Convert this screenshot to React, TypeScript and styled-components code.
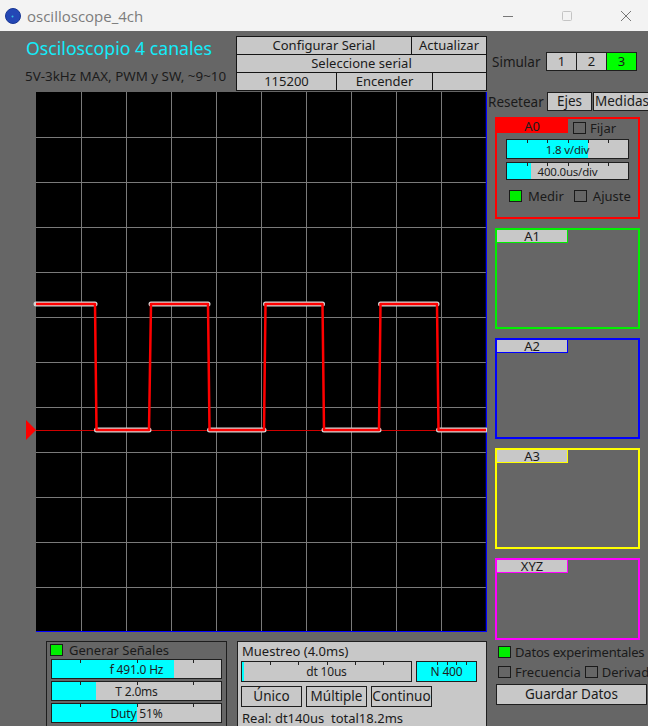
import React from "react";
import styled, { createGlobalStyle } from "styled-components";

const Global = createGlobalStyle`
  html, body { margin: 0; padding: 0; background: #666666; overflow: hidden; }
  * { box-sizing: border-box; }
`;

const FONT = `"Noto Sans", "Open Sans", sans-serif`;

const Window = styled.div`
  width: 648px;
  height: 726px;
  display: flex;
  flex-direction: column;
  overflow: hidden;
  font-family: ${FONT};
  color: #1a1a1a;
  background: #666666;
`;

/* ---------- title bar ---------- */
const TitleBar = styled.div`
  flex: none;
  height: 31px;
  background: #f3f3f3;
  display: flex;
  align-items: center;
  padding-left: 5px;
`;
const AppName = styled.span`
  margin-left: 6px;
  font-family: "Open Sans", "Noto Sans", sans-serif;
  font-size: 15px;
  color: #7c7c7c;
`;
const WinControls = styled.div`
  margin-left: auto;
  display: flex;
  gap: 15px;
  height: 100%;
`;
const WinBtn = styled.div`
  width: 44px;
  height: 100%;
  display: flex;
  align-items: center;
  justify-content: center;
`;

/* ---------- body ---------- */
const Body = styled.div`
  flex: 1;
  display: flex;
  min-height: 0;
`;
const LeftCol = styled.div`
  width: 487px;
  flex: none;
  display: flex;
  flex-direction: column;
`;
const Header = styled.div`
  height: 61px;
  display: flex;
`;
const TitleBlock = styled.div`
  width: 236px;
  padding: 7px 0 0 26px;
  display: flex;
  flex-direction: column;
`;
const MainTitle = styled.div`
  font-size: 17.7px;
  line-height: 20px;
  color: #12ecfa;
  white-space: nowrap;
`;
const SubTitle = styled.div`
  margin-top: 9px;
  margin-left: -1px;
  font-size: 13.4px;
  line-height: 18px;
  color: #1c1c1c;
  white-space: nowrap;
`;
const SerialGrid = styled.div`
  margin-top: 5px;
  width: 251px;
  height: 55px;
  display: grid;
  grid-template-columns: 100px 75px 21px 54px;
  grid-template-rows: 18px 18px 18px;
  border-top: 1px solid #151515;
  border-left: 1px solid #151515;
`;
const GridCell = styled.div<{ $span: string }>`
  grid-column: ${(p) => p.$span};
  background: #c8c8c8;
  border-right: 1px solid #151515;
  border-bottom: 1px solid #151515;
  font-size: 13px;
  line-height: 17px;
  text-align: center;
  white-space: nowrap;
  overflow: hidden;
`;

const PlotSvg = styled.svg`
  display: block;
  flex: none;
`;

const Bottom = styled.div`
  flex: 1;
  display: flex;
  padding-top: 9px;
  overflow: hidden;
`;
const GenPanel = styled.div`
  margin-left: 46px;
  width: 181px;
  height: 92px;
  border: 1px solid #1e1e1e;
  padding: 1px 0 0 3px;
  display: flex;
  flex-direction: column;
  gap: 2px;
`;
const GenHead = styled.div`
  display: flex;
  align-items: center;
  height: 14px;
  gap: 6px;
  font-size: 13px;
`;
const SliderStack = styled.div`
  display: flex;
  flex-direction: column;
  gap: 2px;
  padding-left: 1px;
`;
const MuestPanel = styled.div`
  margin-left: 10px;
  width: 250px;
  height: 92px;
  background: #c8c8c8;
  border: 1px solid #1e1e1e;
  padding: 0 0 0 3px;
  display: flex;
  flex-direction: column;
`;
const PanelText = styled.div<{ $mt?: number }>`
  font-size: 13px;
  line-height: 18px;
  white-space: nowrap;
  padding-left: 1px;
  margin-top: ${(p) => p.$mt ?? 0}px;
`;
const Row = styled.div<{ $gap: number; $mt: number }>`
  display: flex;
  gap: ${(p) => p.$gap}px;
  margin-top: ${(p) => p.$mt}px;
`;
const Btn = styled.div<{ $w: number; $h: number; $ml?: number }>`
  width: ${(p) => p.$w}px;
  height: ${(p) => p.$h}px;
  margin-left: ${(p) => p.$ml ?? 0}px;
  flex: none;
  background: #c8c8c8;
  border: 1px solid #1e1e1e;
  font-size: 13.5px;
  line-height: ${(p) => p.$h - 2}px;
  text-align: center;
  white-space: nowrap;
  overflow: hidden;
`;

/* ---------- slider ---------- */
const SliderBox = styled.div<{ $w: number; $h: number }>`
  position: relative;
  width: ${(p) => p.$w}px;
  height: ${(p) => p.$h}px;
  flex: none;
  background: #c8c8c8;
  border: 1px solid #1e1e1e;
  display: flex;
  align-items: center;
  justify-content: center;
  overflow: hidden;
`;
const SliderFill = styled.div`
  position: absolute;
  left: 0;
  top: 0;
  bottom: 0;
  background: #00ffff;
`;
const Tick = styled.div`
  position: absolute;
  top: 0;
  width: 1px;
  height: 3px;
  background: #222;
`;
const SliderText = styled.span<{ $size: number }>`
  position: relative;
  font-size: ${(p) => p.$size}px;
  color: #1e1e1e;
  white-space: nowrap;
  letter-spacing: -0.2px;
`;

function Slider({
  w,
  h,
  fill,
  text,
  size = 12,
  ticks = [1, 2, 3, 4, 5],
}: {
  w: number;
  h: number;
  fill: number;
  text: string;
  size?: number;
  ticks?: number[];
}) {
  return (
    <SliderBox $w={w} $h={h}>
      <SliderFill style={{ width: `${fill * 100}%` }} />
      {ticks.map((t) => (
        <Tick key={t} style={{ left: `${(t / 6) * 100}%` }} />
      ))}
      <SliderText $size={size}>{text}</SliderText>
    </SliderBox>
  );
}

/* ---------- check ---------- */
const CheckBox = styled.div<{ $on?: boolean }>`
  width: 13px;
  height: 12px;
  flex: none;
  border: 1px solid #1a1a1a;
  background: ${(p) => (p.$on ? "#00ee00" : "transparent")};
`;

/* ---------- side column ---------- */
const Side = styled.div`
  width: 161px;
  flex: none;
  display: flex;
  flex-direction: column;
  padding-top: 21px;
  overflow: hidden;
`;
const SideRow = styled.div<{ $mt: number; $pl: number }>`
  display: flex;
  align-items: center;
  height: 19px;
  margin-top: ${(p) => p.$mt}px;
  padding-left: ${(p) => p.$pl}px;
  white-space: nowrap;
`;
const SideLabel = styled.span<{ $w: number }>`
  width: ${(p) => p.$w}px;
  flex: none;
  font-size: 13.5px;
`;
const SegBtn = styled.div<{ $on?: boolean }>`
  width: 31px;
  height: 19px;
  border: 1px solid #1e1e1e;
  background: ${(p) => (p.$on ? "#00ff00" : "#c8c8c8")};
  font-size: 13px;
  line-height: 17px;
  text-align: center;
  & + & {
    margin-left: -1px;
  }
`;
const Channels = styled.div`
  margin: 6px 0 0 8px;
  display: flex;
  flex-direction: column;
  gap: 9px;
`;
const ChannelPanel = styled.div<{ $color: string; $h: number }>`
  width: 145px;
  height: ${(p) => p.$h}px;
  border: 2px solid ${(p) => p.$color};
  display: flex;
  flex-direction: column;
`;
const PanelHead = styled.div`
  display: flex;
  align-items: center;
  height: 18px;
`;
const ChanLabel = styled.div<{ $bg: string; $border: string; $mt: number }>`
  width: 72px;
  height: 14px;
  margin: ${(p) => p.$mt}px 0 0 -1px;
  align-self: flex-start;
  background: ${(p) => p.$bg};
  border: 1px solid ${(p) => p.$border};
  font-size: 13px;
  line-height: 12px;
  text-align: center;
`;
const InlineCheck = styled.div<{ $ml: number; $gap?: number }>`
  display: flex;
  align-items: center;
  gap: ${(p) => p.$gap ?? 4}px;
  margin-left: ${(p) => p.$ml}px;
  font-size: 13px;
  white-space: nowrap;
`;
const ChanBody = styled.div`
  display: flex;
  flex-direction: column;
  gap: 3px;
  padding: 2px 0 0 9px;
`;
const MeasureRow = styled.div`
  display: flex;
  align-items: center;
  margin: 10px 0 0 12px;
  height: 12px;
`;
const CheckLine = styled.div<{ $mt: number }>`
  display: flex;
  align-items: center;
  height: 14px;
  margin: ${(p) => p.$mt}px 0 0 11px;
  white-space: nowrap;
`;
const SaveBtn = styled.div`
  margin: 5px 0 0 9px;
  width: 151px;
  height: 21px;
  background: #c8c8c8;
  border: 1px solid #1e1e1e;
  font-size: 13.5px;
  line-height: 19px;
  text-align: center;
`;

/* ---------- plot ---------- */
const HIGH = 212;
const LOW = 338;
const tracePts: [number, number][] = [
  [36, HIGH], [95, HIGH], [96.5, LOW], [149, LOW], [151, HIGH], [208, HIGH],
  [209.5, LOW], [264, LOW], [265.5, HIGH], [322.5, HIGH], [324, LOW], [379, LOW],
  [380.5, HIGH], [437, HIGH], [438.5, LOW], [486, LOW],
];
const horizSegs: [number, number, number][] = [];
for (let i = 0; i < tracePts.length - 1; i++) {
  const [x1, y1] = tracePts[i];
  const [x2, y2] = tracePts[i + 1];
  if (y1 === y2) horizSegs.push([x1, x2, y1]);
}

function Plot() {
  const vx = [81, 126, 171, 216, 261, 306, 351, 396, 441];
  const hy = Array.from({ length: 11 }, (_, i) => 45 * (i + 1));
  return (
    <PlotSvg width={487} height={540} viewBox="0 0 487 540">
      <rect x={36} y={0} width={451} height={540} fill="#000" />
      {vx.map((x) => (
        <line key={"v" + x} x1={x + 0.5} y1={0} x2={x + 0.5} y2={540} stroke="#7a7a7a" strokeWidth={1} />
      ))}
      {hy.map((y) => (
        <line key={"h" + y} x1={36} y1={y + 0.5} x2={487} y2={y + 0.5} stroke="#7a7a7a" strokeWidth={1} />
      ))}
      <line x1={486.5} y1={0} x2={486.5} y2={540} stroke="#0000ff" strokeWidth={1.5} />
      <line x1={36} y1={539.5} x2={487} y2={539.5} stroke="#0000ff" strokeWidth={1} />
      <line x1={36} y1={LOW + 0.5} x2={486} y2={LOW + 0.5} stroke="#d00000" strokeWidth={1} />
      {horizSegs.map(([x1, x2, y], i) => (
        <line key={"s" + i} x1={x1} y1={y} x2={x2} y2={y} stroke="#d4d4d4" strokeWidth={5} strokeLinecap="round" />
      ))}
      <polyline
        points={tracePts.map((p) => p.join(",")).join(" ")}
        fill="none"
        stroke="#ff0000"
        strokeWidth={2.5}
        strokeLinejoin="round"
      />
      <polygon points={`26,${LOW - 10} 26,${LOW + 10} 36,${LOW}`} fill="#ff0000" />
    </PlotSvg>
  );
}

export default function App() {
  return (
    <Window>
      <Global />
      <TitleBar>
        <svg width="16" height="16" viewBox="0 0 16 16">
          <circle cx="8" cy="8" r="7.5" fill="#2447b5" stroke="#193794" strokeWidth="1" />
          <circle cx="7.5" cy="8.5" r="1" fill="#36c0e0" />
        </svg>
        <AppName>oscilloscope_4ch</AppName>
        <WinControls>
          <WinBtn>
            <svg width="12" height="12" viewBox="0 0 12 12">
              <line x1="1" y1="6.5" x2="11" y2="6.5" stroke="#777" strokeWidth="1" />
            </svg>
          </WinBtn>
          <WinBtn>
            <svg width="12" height="12" viewBox="0 0 12 12">
              <rect x="1.5" y="1.5" width="9" height="9" rx="1" fill="none" stroke="#c4c4c4" strokeWidth="1" />
            </svg>
          </WinBtn>
          <WinBtn>
            <svg width="12" height="12" viewBox="0 0 12 12">
              <path d="M1 1 L11 11 M11 1 L1 11" stroke="#777" strokeWidth="1" />
            </svg>
          </WinBtn>
        </WinControls>
      </TitleBar>
      <Body>
        <LeftCol>
          <Header>
            <TitleBlock>
              <MainTitle>Osciloscopio 4 canales</MainTitle>
              <SubTitle>5V-3kHz MAX, PWM y SW, ~9~10</SubTitle>
            </TitleBlock>
            <SerialGrid>
              <GridCell $span="1 / 3">Configurar Serial</GridCell>
              <GridCell $span="3 / 5">Actualizar</GridCell>
              <GridCell $span="1 / 5">Seleccione serial</GridCell>
              <GridCell $span="1 / 2">115200</GridCell>
              <GridCell $span="2 / 4">Encender</GridCell>
              <GridCell $span="4 / 5" />
            </SerialGrid>
          </Header>
          <Plot />
          <Bottom>
            <GenPanel>
              <GenHead>
                <CheckBox $on />
                <span>Generar Señales</span>
              </GenHead>
              <SliderStack>
                <Slider w={171} h={20} fill={0.72} text="f 491.0 Hz" ticks={[1, 3, 5]} />
                <Slider w={171} h={20} fill={0.26} text="T 2.0ms" ticks={[1, 3, 5]} />
                <Slider w={171} h={20} fill={0.5} text="Duty 51%" ticks={[1, 3, 5]} />
              </SliderStack>
            </GenPanel>
            <MuestPanel>
              <PanelText>Muestreo (4.0ms)</PanelText>
              <Row $gap={4} $mt={1}>
                <Slider w={171} h={21} fill={0.012} text="dt 10us" />
                <Slider w={61} h={21} fill={1} text="N 400" ticks={[2, 3, 4, 5]} />
              </Row>
              <Row $gap={4} $mt={4}>
                <Btn $w={61} $h={21}>Único</Btn>
                <Btn $w={61} $h={21}>Múltiple</Btn>
                <Btn $w={61} $h={21}>Continuo</Btn>
              </Row>
              <PanelText $mt={2}>Real: dt140us&nbsp; total18.2ms</PanelText>
            </MuestPanel>
          </Bottom>
        </LeftCol>
        <Side>
          <SideRow $mt={0} $pl={5}>
            <SideLabel $w={54}>Simular</SideLabel>
            <SegBtn>1</SegBtn>
            <SegBtn>2</SegBtn>
            <SegBtn $on>3</SegBtn>
          </SideRow>
          <SideRow $mt={21} $pl={1}>
            <SideLabel $w={59}>Resetear</SideLabel>
            <Btn $w={45} $h={19}>Ejes</Btn>
            <Btn $w={58} $h={19} $ml={1}>Medidas</Btn>
          </SideRow>
          <Channels>
            <ChannelPanel $color="#ff0000" $h={102}>
              <PanelHead>
                <ChanLabel $bg="#ff0000" $border="#ff0000" $mt={0}>A0</ChanLabel>
                <InlineCheck $ml={5}>
                  <CheckBox />
                  <span>Fijar</span>
                </InlineCheck>
              </PanelHead>
              <ChanBody>
                <Slider w={123} h={20} fill={0.67} text="1.8 v/div" size={11.5} />
                <Slider w={123} h={18} fill={0.2} text="400.0us/div" size={11.5} />
              </ChanBody>
              <MeasureRow>
                <InlineCheck $ml={0} $gap={6}>
                  <CheckBox $on />
                  <span>Medir</span>
                </InlineCheck>
                <InlineCheck $ml={10} $gap={6}>
                  <CheckBox />
                  <span>Ajuste</span>
                </InlineCheck>
              </MeasureRow>
            </ChannelPanel>
            <ChannelPanel $color="#00ee00" $h={101}>
              <ChanLabel $bg="#c8c8c8" $border="#00ee00" $mt={-1}>A1</ChanLabel>
            </ChannelPanel>
            <ChannelPanel $color="#0000ff" $h={101}>
              <ChanLabel $bg="#c8c8c8" $border="#0000ff" $mt={-1}>A2</ChanLabel>
            </ChannelPanel>
            <ChannelPanel $color="#ffff00" $h={101}>
              <ChanLabel $bg="#c8c8c8" $border="#ffff00" $mt={-1}>A3</ChanLabel>
            </ChannelPanel>
            <ChannelPanel $color="#ff00ff" $h={82}>
              <ChanLabel $bg="#c8c8c8" $border="#ff00ff" $mt={-1}>XYZ</ChanLabel>
            </ChannelPanel>
          </Channels>
          <CheckLine $mt={5}>
            <InlineCheck $ml={0}>
              <CheckBox $on />
              <span style={{ letterSpacing: "-0.2px" }}>Datos experimentales</span>
            </InlineCheck>
          </CheckLine>
          <CheckLine $mt={6}>
            <InlineCheck $ml={0}>
              <CheckBox />
              <span>Frecuencia</span>
            </InlineCheck>
            <InlineCheck $ml={4}>
              <CheckBox />
              <span>Derivada</span>
            </InlineCheck>
          </CheckLine>
          <SaveBtn>Guardar Datos</SaveBtn>
        </Side>
      </Body>
    </Window>
  );
}
